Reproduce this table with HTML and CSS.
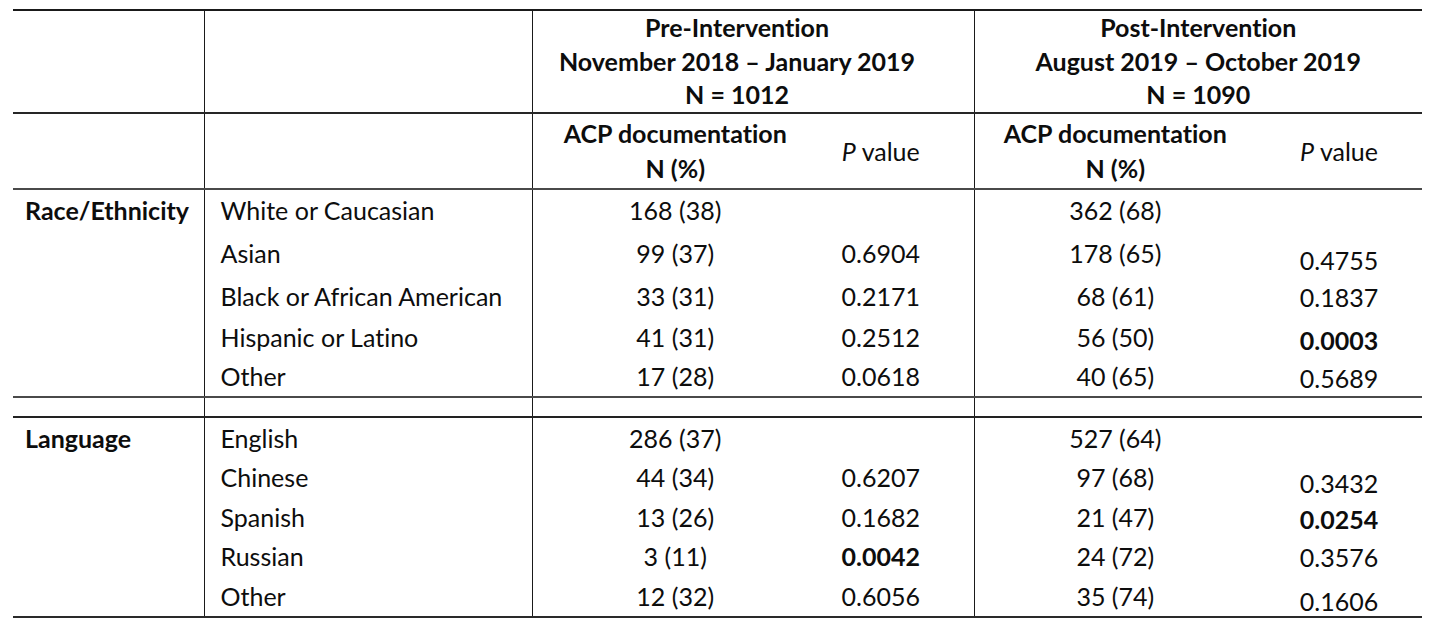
FILE: index.html
```html
<!DOCTYPE html>
<html lang="en">
<head>
<meta charset="utf-8">
<title>ACP documentation by race/ethnicity and language</title>
<link rel="stylesheet" href="styles.css">
</head>
<body>
<table class="acp">
  <colgroup>
    <col class="c-group">
    <col class="c-cat">
    <col class="c-pre-n">
    <col class="c-pre-p">
    <col class="c-post-n">
    <col class="c-post-p">
  </colgroup>
  <thead>
    <tr class="r-period">
      <th class="grp"></th>
      <th class="cat"></th>
      <th class="period pre" colspan="2">Pre-Intervention<br>November 2018 – January 2019<br>N = 1012</th>
      <th class="period post" colspan="2">Post-Intervention<br>August 2019 – October 2019<br>N = 1090</th>
    </tr>
    <tr class="r-sub">
      <th class="grp"></th>
      <th class="cat"></th>
      <th class="sub n sep">ACP documentation<br>N (%)</th>
      <th class="sub p pre-p"><i>P</i> value</th>
      <th class="sub n sep">ACP documentation<br>N (%)</th>
      <th class="sub p"><i>P</i> value</th>
    </tr>
  </thead>
  <tbody class="race">
    <tr class="h42 first">
      <th class="grp">Race/Ethnicity</th>
      <td class="cat">White or Caucasian</td>
      <td class="n sep">168 (38)</td>
      <td class="p pre-p"></td>
      <td class="n sep">362 (68)</td>
      <td class="p"></td>
    </tr>
    <tr class="h44">
      <th class="grp"></th>
      <td class="cat">Asian</td>
      <td class="n sep">99 (37)</td>
      <td class="p pre-p">0.6904</td>
      <td class="n sep">178 (65)</td>
      <td class="p dn7">0.4755</td>
    </tr>
    <tr class="h43">
      <th class="grp"></th>
      <td class="cat">Black or African American</td>
      <td class="n sep">33 (31)</td>
      <td class="p pre-p">0.2171</td>
      <td class="n sep">68 (61)</td>
      <td class="p dn1">0.1837</td>
    </tr>
    <tr class="h39">
      <th class="grp"></th>
      <td class="cat">Hispanic or Latino</td>
      <td class="n sep">41 (31)</td>
      <td class="p pre-p">0.2512</td>
      <td class="n sep">56 (50)</td>
      <td class="p dn3"><b>0.0003</b></td>
    </tr>
    <tr class="h40">
      <th class="grp"></th>
      <td class="cat">Other</td>
      <td class="n sep">17 (28)</td>
      <td class="p pre-p">0.0618</td>
      <td class="n sep">40 (65)</td>
      <td class="p dn2">0.5689</td>
    </tr>
  </tbody>
  <tbody class="spacer">
    <tr class="h20 first">
      <td class="grp"></td>
      <td class="cat"></td>
      <td class="sep"></td>
      <td></td>
      <td class="sep"></td>
      <td></td>
    </tr>
  </tbody>
  <tbody class="lang">
    <tr class="h41 first">
      <th class="grp">Language</th>
      <td class="cat">English</td>
      <td class="n sep">286 (37)</td>
      <td class="p pre-p"></td>
      <td class="n sep">527 (64)</td>
      <td class="p"></td>
    </tr>
    <tr class="h39">
      <th class="grp"></th>
      <td class="cat">Chinese</td>
      <td class="n sep">44 (34)</td>
      <td class="p pre-p">0.6207</td>
      <td class="n sep">97 (68)</td>
      <td class="p dn6">0.3432</td>
    </tr>
    <tr class="h40">
      <th class="grp"></th>
      <td class="cat">Spanish</td>
      <td class="n sep">13 (26)</td>
      <td class="p pre-p">0.1682</td>
      <td class="n sep">21 (47)</td>
      <td class="p dn2"><b>0.0254</b></td>
    </tr>
    <tr class="h39">
      <th class="grp"></th>
      <td class="cat">Russian</td>
      <td class="n sep">3 (11)</td>
      <td class="p pre-p"><b>0.0042</b></td>
      <td class="n sep">24 (72)</td>
      <td class="p dn1">0.3576</td>
    </tr>
    <tr class="h41 last">
      <th class="grp"></th>
      <td class="cat">Other</td>
      <td class="n sep">12 (32)</td>
      <td class="p pre-p">0.6056</td>
      <td class="n sep">35 (74)</td>
      <td class="p dn5">0.1606</td>
    </tr>
  </tbody>
</table>
</body>
</html>
```
FILE: styles.css
```css
html, body {
  margin: 0;
  padding: 0;
  background: #ffffff;
}

body {
  font-family: "Lato", "Liberation Sans", sans-serif;
  font-size: 25px;
  color: #0d0d0d;
  font-variant-ligatures: none;
  font-feature-settings: "liga" 0, "clig" 0;
}

.acp {
  margin: 9px 0 0 13px;
  width: 1409px;
  border-collapse: collapse;
  table-layout: fixed;
  border-top: 2px solid #1a1a1a;
  border-bottom: 2px solid #2a2a2a;
}

.c-group { width: 191px; }
.c-cat { width: 328px; }
.c-pre-n { width: 286px; }
.c-pre-p { width: 156px; }
.c-post-n { width: 282px; }
.c-post-p { width: 166px; }

.acp th,
.acp td {
  padding: 0;
  vertical-align: middle;
  line-height: 26px;
  font-weight: 400;
}

.acp th.grp,
.acp td.grp {
  text-align: left;
  padding-left: 12px;
  font-weight: 700;
}

.acp .cat {
  text-align: left;
  padding-left: 16px;
  border-left: 1.5px solid #1a1a1a;
}

.acp .sep {
  border-left: 1.5px solid #1a1a1a;
}

.acp .n,
.acp .p {
  text-align: center;
}

.acp .pre-p {
  padding-right: 30px;
}

/* header rows */
.r-period {
  height: 100px;
}

.r-period th {
  border-bottom: 2px solid #262626;
}

.r-period .period {
  font-weight: 700;
  line-height: 33.5px;
  text-align: center;
}

.r-period .period.pre {
  padding-right: 32px;
  border-left: 1.5px solid #1a1a1a;
}

.r-period .period.post {
  border-left: 1.5px solid #1a1a1a;
}

.r-sub {
  height: 76px;
}

.r-sub th {
  border-bottom: 2px solid #4a4a4a;
}

.r-sub .sub.n {
  font-weight: 700;
  line-height: 35px;
}

.r-sub .sub.p {
  font-weight: 400;
}

/* group separators */
.spacer .first td {
  border-top: 2px solid #4a4a4a;
}

.lang .first th,
.lang .first td {
  border-top: 2px solid #222222;
}

/* row heights */
.h20 { height: 20px; }
.h39 { height: 39px; }
.h40 { height: 40px; }
.h41 { height: 41px; }
.h42 { height: 42px; }
.h43 { height: 43px; }
.h44 { height: 44px; }

/* small vertical drifts of the post-intervention p values */
.dn1 { padding-top: 2px !important; }
.dn2 { padding-top: 4px !important; }
.dn3 { padding-top: 6px !important; }
.dn5 { padding-top: 10px !important; }
.dn6 { padding-top: 12px !important; }
.dn7 { padding-top: 14px !important; }

.acp b {
  font-weight: 700;
}

.acp i {
  font-style: italic;
}
```
